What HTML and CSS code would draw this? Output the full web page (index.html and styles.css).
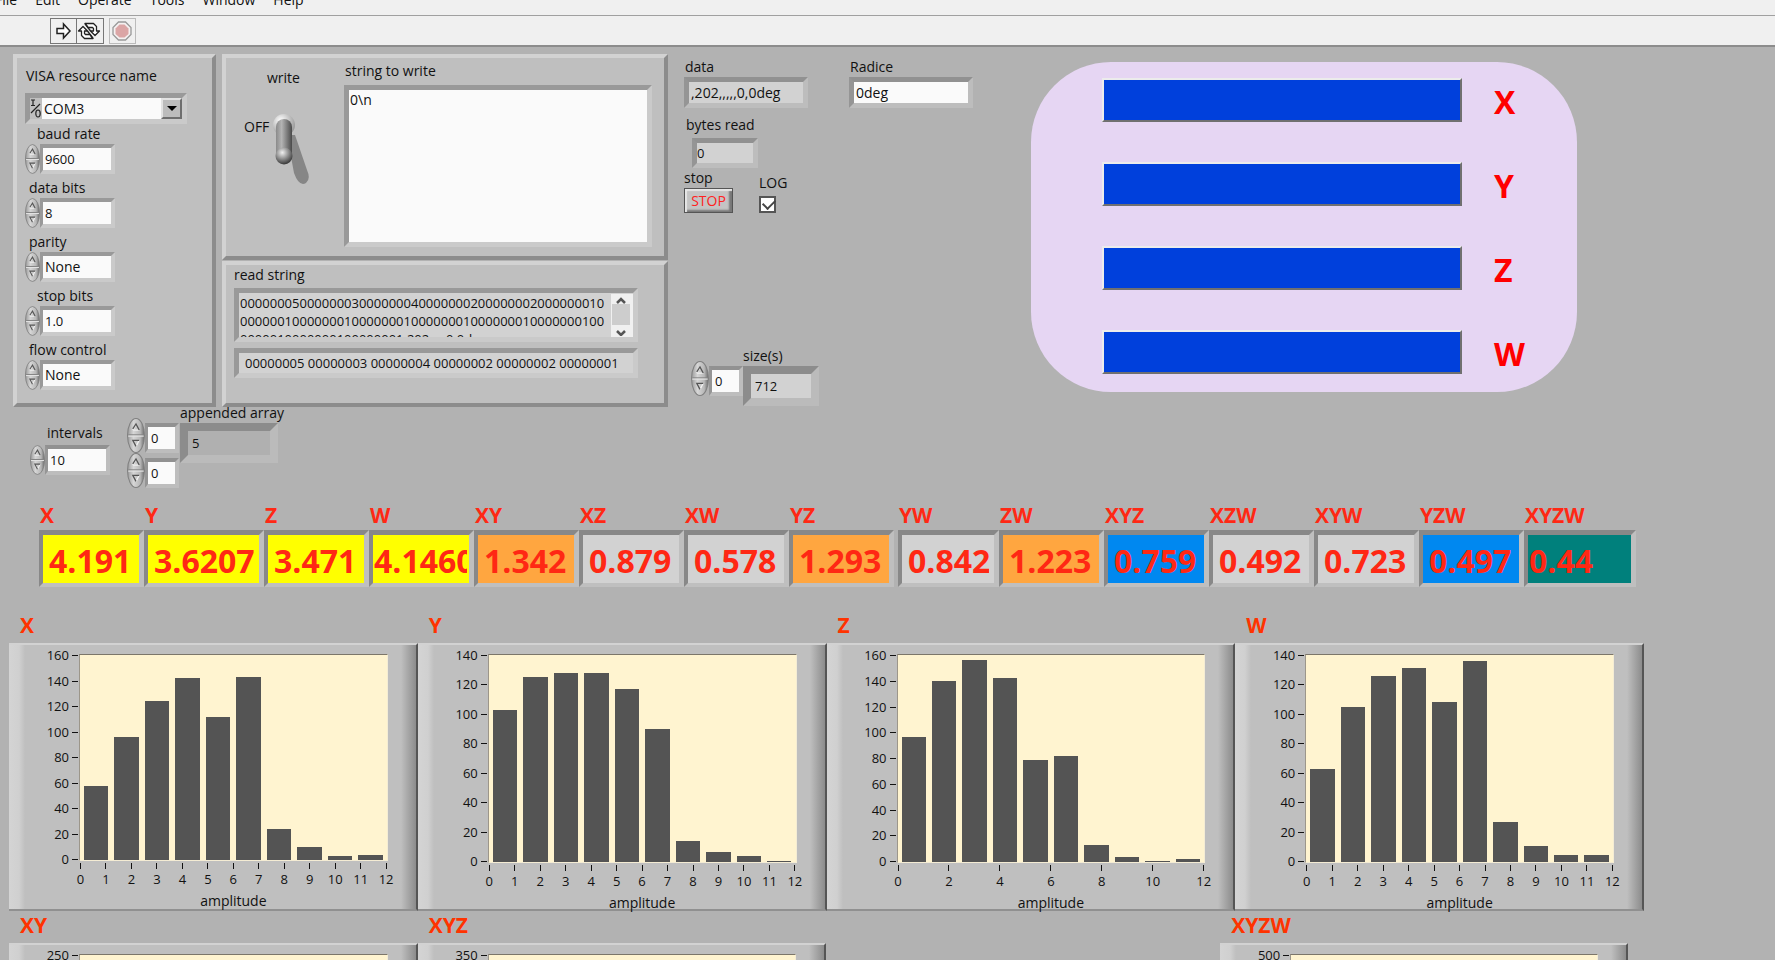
FILE: index.html
```html
<!DOCTYPE html>
<html lang="en">
  <head>
    <meta charset="utf-8">
    <title>Serial acquisition</title>
    <link rel="stylesheet" href="styles.css">
  </head>
  <body>
    <!-- shared icons -->
    <svg class="defs" aria-hidden="true">
      <defs>
        <linearGradient id="metal" x1="0" x2="1">
          <stop offset="0" stop-color="#9a9a9a"/>
          <stop offset=".35" stop-color="#d6d6d6"/>
          <stop offset=".75" stop-color="#b8b8b8"/>
          <stop offset="1" stop-color="#6a6a6a"/>
        </linearGradient>
        <linearGradient id="lever" x1="0" x2="1">
          <stop offset="0" stop-color="#8a8a8a"/>
          <stop offset=".35" stop-color="#b4b4b4"/>
          <stop offset="1" stop-color="#4a4a4a"/>
        </linearGradient>
        <radialGradient id="ball" cx=".35" cy=".3" r=".8">
          <stop offset="0" stop-color="#ffffff"/>
          <stop offset=".5" stop-color="#c4c4c4"/>
          <stop offset="1" stop-color="#8c8c8c"/>
        </radialGradient>
        <radialGradient id="tip" cx=".4" cy=".3" r=".75">
          <stop offset="0" stop-color="#f0f0f0"/>
          <stop offset=".5" stop-color="#8e8e8e"/>
          <stop offset="1" stop-color="#2c2c2c"/>
        </radialGradient>
      </defs>
      <symbol id="spinner" viewBox="0 0 14 29" preserveAspectRatio="none">
        <ellipse cx="7" cy="14.5" rx="6.6" ry="14" fill="url(#metal)" stroke="#808080" stroke-width=".8"/>
        <path d="M1 14h12" stroke="#858585"/>
        <path d="M1 15h12" stroke="#e2e2e2"/>
        <path d="M4.500 10L7 5.500M4.500 10h5" stroke="#eee" fill="none"/>
        <path d="M4.500 9L7 5l2.500 5" stroke="#555" fill="none"/>
        <path d="M9.500 18.500L7 23.500" stroke="#f2f2f2" fill="none"/>
        <path d="M9.500 18.500h-5l2.500 5" stroke="#555" fill="none"/>
      </symbol>
    </svg>

    <nav class="menu">
      <a href="#">File</a>
      <a href="#">Edit</a>
      <a href="#">Operate</a>
      <a href="#">Tools</a>
      <a href="#">Window</a>
      <a href="#">Help</a>
    </nav>
    <div class="toolbar">
      <button class="tool" aria-label="Run">
        <svg width="24" height="24" viewBox="0 0 24 24"><path d="M6 9.500h6.500V5L19 12l-6.500 7v-4.500H6z" fill="#fff" stroke="#222" stroke-width="1.500"/></svg>
      </button>
      <button class="tool" aria-label="Run continuously">
        <svg width="24" height="24" viewBox="0 0 24 24" fill="#fff" stroke="#222" stroke-width="1.300" stroke-linejoin="round">
          <path d="M8 4.500h8.500l3 3V12h3l-4.500 4.500L13.500 12h3V9.500l-1-1H11z"/>
          <path d="M16 19.500H7.500l-3-3V12h-3L6 7.500l4.500 4.500h-3v2.500l1 1H13z"/>
          <path d="M8 4.500l5.500 7.500M16 19.500L10.500 12"/>
        </svg>
      </button>
      <button class="tool tool-off" aria-label="Abort" disabled>
        <svg width="24" height="24" viewBox="0 0 24 24"><path d="M8.500 3h7L21 8.500v7L15.500 21h-7L3 15.500v-7z" fill="#f4f0f0" stroke="#999" stroke-width="1.300"/><path d="M9.500 5.500h5L18.500 9.500v5.500l-4 3.500h-5l-4-3.500V9.500z" fill="#dba5a5"/></svg>
      </button>
    </div>

    <main>
      <div class="top">
        <section class="panel visa">
          <label for="visa">VISA resource name</label>
          <div class="combo">
            <svg width="12" height="22" viewBox="0 0 12 22" fill="none" stroke="#222" stroke-width="1.200"><path d="M1 2h4M3 2v5M1 7.500h4M1 15L10 6"/><ellipse cx="8" cy="15.500" rx="2.200" ry="3.500"/></svg>
            <select id="visa"><option>COM3</option></select>
            <span class="combo-arrow"></span>
          </div>
          <div class="field">
            <label class="inset-lg" for="baud">baud rate</label>
            <div class="spin-box"><button class="spin" aria-label="Change baud rate"><svg><use href="#spinner"/></svg></button><input class="num" id="baud" value="9600"></div>
          </div>
          <div class="field">
            <label for="bits">data bits</label>
            <div class="spin-box"><button class="spin" aria-label="Change data bits"><svg><use href="#spinner"/></svg></button><input class="num" id="bits" value="8"></div>
          </div>
          <div class="field">
            <label for="parity">parity</label>
            <div class="spin-box"><button class="spin" aria-label="Change parity"><svg><use href="#spinner"/></svg></button><input id="parity" value="None"></div>
          </div>
          <div class="field">
            <label class="inset-lg" for="stopbits">stop bits</label>
            <div class="spin-box"><button class="spin" aria-label="Change stop bits"><svg><use href="#spinner"/></svg></button><input class="num" id="stopbits" value="1.0"></div>
          </div>
          <div class="field">
            <label for="flow">flow control</label>
            <div class="spin-box"><button class="spin" aria-label="Change flow control"><svg><use href="#spinner"/></svg></button><input id="flow" value="None"></div>
          </div>
        </section>

        <div class="strings">
          <section class="panel write">
            <div class="toggle">
              <label for="write">write</label>
              <label class="toggle-row" for="write">
                <span>OFF</span>
                <input id="write" type="checkbox">
                <svg width="38" height="72" viewBox="0 0 38 72">
                  <path d="M14 22l7 38q5 14 12 10 5-4 1-13L22 22z" fill="#868686"/>
                  <circle cx="11" cy="12" r="11" fill="url(#ball)"/>
                  <rect x="3" y="6" width="16" height="44" rx="8" fill="url(#lever)"/>
                  <circle cx="11" cy="43" r="8.500" fill="url(#tip)"/>
                </svg>
              </label>
            </div>
            <div class="group">
              <label for="towrite">string to write</label>
              <textarea class="sunken" id="towrite">0\n</textarea>
            </div>
          </section>
          <section class="panel read">
            <label for="readstr">read string</label>
            <div class="sunken read-box">
              <textarea class="num" id="readstr" readonly>000000050000000300000004000000020000000200000001000000010000000100000001000000010000000100000001000000010000000100000001,202,,,,,0,0deg</textarea>
              <div class="scroll">
                <svg width="20" height="42" viewBox="0 0 20 42"><rect x="1" y="10" width="18" height="21" fill="#cdcdcd"/><path d="M6 9l4-4 4 4M6 37l4 4 4-4" fill="none" stroke="#555" stroke-width="2.500"/></svg>
              </div>
            </div>
            <input class="sunken num read-line" aria-label="read words" readonly value="00000005 00000003 00000004 00000002 00000002 00000001">
          </section>
        </div>

        <div class="io">
          <div class="io-row">
            <div class="group">
              <label for="data">data</label>
              <input class="sunken" id="data" readonly value=",202,,,,,0,0deg">
            </div>
            <div class="group">
              <label for="radice">Radice</label>
              <input class="sunken" id="radice" value="0deg">
            </div>
          </div>
          <div class="group bytes">
            <label for="bytes">bytes read</label>
            <input class="sunken num" id="bytes" readonly value="0">
          </div>
          <div class="io-row stop-row">
            <div class="group">
              <label for="stop">stop</label>
              <button class="stop" id="stop">STOP</button>
            </div>
            <div class="group log">
              <label for="log">LOG</label>
              <input id="log" type="checkbox" checked>
            </div>
          </div>
          <div class="array sizes">
            <div class="array-index">
              <div class="spin-box"><button class="spin" aria-label="Change size index"><svg><use href="#spinner"/></svg></button><input class="num" aria-label="size index" value="0"></div>
            </div>
            <div class="group">
              <label for="size">size(s)</label>
              <input class="num array-value" id="size" readonly value="712">
            </div>
          </div>
        </div>

        <section class="leds">
          <div class="led-row"><span class="led"></span><b>X</b></div>
          <div class="led-row"><span class="led"></span><b>Y</b></div>
          <div class="led-row"><span class="led"></span><b>Z</b></div>
          <div class="led-row"><span class="led"></span><b>W</b></div>
        </section>
      </div>

      <div class="lower">
        <div class="field intervals">
          <label for="intervals">intervals</label>
          <div class="spin-box"><button class="spin" aria-label="Change intervals"><svg><use href="#spinner"/></svg></button><input class="num" id="intervals" value="10"></div>
        </div>
        <div class="array">
          <div class="array-index">
            <div class="spin-box"><button class="spin" aria-label="Change row index"><svg><use href="#spinner"/></svg></button><input class="num" aria-label="row index" value="0"></div>
            <div class="spin-box"><button class="spin" aria-label="Change column index"><svg><use href="#spinner"/></svg></button><input class="num" aria-label="column index" value="0"></div>
          </div>
          <div class="group appended">
            <label for="appended">appended array</label>
            <input class="num array-value" id="appended" readonly value="5">
          </div>
        </div>
      </div>

      <div class="values">
        <div class="value yellow"><label for="vx">X</label><output id="vx">4.191</output></div>
        <div class="value yellow"><label for="vy">Y</label><output id="vy">3.6207</output></div>
        <div class="value yellow"><label for="vz">Z</label><output id="vz">3.471</output></div>
        <div class="value yellow tight"><label for="vw">W</label><output id="vw">4.1460</output></div>
        <div class="value orange"><label for="vxy">XY</label><output id="vxy">1.342</output></div>
        <div class="value"><label for="vxz">XZ</label><output id="vxz">0.879</output></div>
        <div class="value"><label for="vxw">XW</label><output id="vxw">0.578</output></div>
        <div class="value orange spaced"><label for="vyz">YZ</label><output id="vyz">1.293</output></div>
        <div class="value"><label for="vyw">YW</label><output id="vyw">0.842</output></div>
        <div class="value orange"><label for="vzw">ZW</label><output id="vzw">1.223</output></div>
        <div class="value blue"><label for="vxyz">XYZ</label><output id="vxyz">0.759</output></div>
        <div class="value"><label for="vxzw">XZW</label><output id="vxzw">0.492</output></div>
        <div class="value"><label for="vxyw">XYW</label><output id="vxyw">0.723</output></div>
        <div class="value blue"><label for="vyzw">YZW</label><output id="vyzw">0.497</output></div>
        <div class="value teal tight"><label for="vxyzw">XYZW</label><output id="vxyzw">0.44</output></div>
      </div>

      <div class="charts" id="charts"></div>
      <div class="charts charts-more" id="chartsMore"></div>
    </main>
    <script src="charts.js"></script>
  </body>
</html>
```
FILE: styles.css
```css
* {
  box-sizing: border-box;
  margin: 0;
  padding: 0;
}

body {
  height: 100vh;
  overflow: hidden;
  background: #b2b2b2;
  color: #111;
  font: 14px/20px "Open Sans", sans-serif;
}

input, select, textarea, button {
  font: inherit;
  color: inherit;
  border-radius: 0;
  outline: none;
}

label {
  display: block;
  white-space: nowrap;
}

.defs {
  position: absolute;
  width: 0;
  height: 0;
}

/* menu and toolbar */
.menu {
  display: flex;
  align-items: flex-end;
  gap: 18px;
  height: 15px;
  margin-left: -5px;
  padding-bottom: 5px;
  background: #f0f0f0;
}

.menu a {
  color: #111;
  text-decoration: none;
}

.toolbar {
  display: flex;
  height: 32px;
  padding: 2px 50px;
  background: #f0f0f0;
  border-top: 1px solid #a0a0a0;
  border-bottom: 2px solid #8c8c8c;
}

.tool {
  width: 27px;
  height: 26px;
  border: 1px solid #777;
  background: #f0f0f0;
}

.tool + .tool {
  border-left: 0;
}

.tool svg {
  display: block;
}

.tool.tool-off {
  margin-left: 5px;
  border: 1px solid #bbb;
}

main {
  padding-top: 7px;
}

/* bevels */
.panel {
  background: #bfbfbf;
  border: 4px solid;
  border-color: #d2d2d2 #8c8c8c #8c8c8c #d2d2d2;
}

.sunken {
  border: 5px solid;
  border-color: #919191 #bdbdbd #bdbdbd #959595;
  background: #fafafa;
}

.sunken[readonly] {
  background: #d2d2d2;
}

.panel .sunken {
  border-color: #999 #cacaca #cacaca #999;
}

.num {
  font-size: 13px;
}

.top {
  display: flex;
  align-items: stretch;
  gap: 6px;
  padding-left: 13px;
}

/* serial settings */
.visa {
  width: 203px;
  height: 353px;
  padding: 8px;
}

.combo {
  position: relative;
  display: flex;
  width: 162px;
  height: 31px;
  margin: 7px 0 0;
  border: 5px solid;
  border-color: #999 #cacaca #cacaca #999;
}

.visa > label {
  padding-left: 1px;
}

.combo select {
  flex: 1;
  padding-left: 2px;
  border: 0;
  background: #fafafa;
  appearance: none;
}

.combo-arrow {
  position: absolute;
  top: 0;
  right: 0;
  width: 21px;
  height: 21px;
  background: #bcbcbc;
  border: 2px solid;
  border-color: #e2e2e2 #6e6e6e #6e6e6e #e2e2e2;
  pointer-events: none;
}

.combo-arrow::after {
  content: "";
  position: absolute;
  top: 6px;
  left: 4px;
  border: 5px solid transparent;
  border-top-color: #000;
  border-bottom: 0;
}

.field {
  margin-bottom: 4px;
}

.field label {
  padding-left: 4px;
}

.field .inset-lg {
  padding-left: 12px;
}

.spin-box {
  display: flex;
  height: 30px;
}

.spin {
  width: 15px;
  height: 30px;
  border: 0;
  background: none;
}

.spin svg {
  display: block;
  width: 100%;
  height: 100%;
}

.spin-box input {
  width: 75px;
  padding-left: 2px;
  background: #fafafa;
  border: 4px solid;
  border-left-width: 3px;
  border-color: #919191 #bdbdbd #bdbdbd #959595;
}

.panel .spin-box input {
  border-color: #999 #cacaca #cacaca #999;
}

/* write and read strings */
.strings {
  display: flex;
  flex-direction: column;
  gap: 1px;
  width: 446px;
}

.write {
  display: flex;
  height: 206px;
  padding-top: 3px;
}

.toggle {
  width: 118px;
  padding: 7px 0 0 18px;
}

.toggle > label:first-child {
  padding-left: 23px;
}

.toggle .toggle-row {
  display: flex;
  align-items: flex-start;
  gap: 4px;
  margin-top: 25px;
}

.toggle-row span {
  margin-top: 4px;
}

.toggle-row input {
  position: absolute;
  opacity: 0;
}

.write label {
  padding-left: 1px;
}

.write .toggle-row {
  padding-left: 0;
}

.write textarea {
  display: block;
  width: 308px;
  height: 162px;
  margin-top: 4px;
  padding: 0 1px;
  resize: none;
}

.read {
  flex: 1;
  padding-left: 8px;
}

.read-box {
  display: flex;
  width: 404px;
  height: 54px;
  margin: 3px 0 6px;
  overflow: hidden;
}

.panel .read-box {
  background: #d2d2d2;
}

.read-box textarea {
  flex: 1;
  padding: 1px;
  border: 0;
  background: none;
  resize: none;
  overflow: hidden;
  line-height: 18px;
  word-break: break-all;
}

.scroll {
  width: 22px;
  margin-top: 1px;
  background: #f0f0f0;
}

.scroll svg {
  display: block;
}

.read-line {
  display: block;
  width: 404px;
  height: 30px;
  padding-left: 6px;
}

/* data, stop and log */
.io {
  width: 310px;
  margin-left: 10px;
  padding-top: 3px;
}

.io-row {
  display: flex;
  gap: 41px;
}

.io-row .sunken {
  display: block;
  width: 124px;
  height: 31px;
  padding-left: 2px;
}

.io-row label {
  padding-left: 1px;
}

.bytes {
  margin-top: 7px;
  padding-left: 2px;
}

.bytes input {
  display: block;
  width: 66px;
  height: 30px;
  margin: 3px 0 0 6px;
}

.stop-row {
  align-items: flex-end;
  gap: 26px;
}

.stop-row label {
  padding: 0;
}

.stop {
  display: block;
  width: 49px;
  height: 25px;
  color: #f22;
  line-height: 16px;
  background: #c4c4c4;
  border: 1px solid #555;
  box-shadow: inset 2px 2px 1px #e6e6e6, inset -3px -2px 2px #777;
}

.log input {
  display: block;
  position: relative;
  width: 17px;
  height: 17px;
  margin-top: 3px;
  background: #fff;
  border: 2px solid #555;
  appearance: none;
}

.log input:checked::before {
  content: "";
  position: absolute;
  top: 1px;
  left: 2px;
  width: 10px;
  height: 6px;
  border: solid #444;
  border-width: 0 0 2px 2px;
  transform: rotate(-45deg);
}

/* array controls: index on the left, element on the right */
.array {
  display: flex;
}

.array-index {
  padding-top: 15px;
}

.array-index .spin-box {
  align-items: flex-end;
  height: 35px;
}

.array-index .spin {
  width: 18px;
  height: 35px;
}

.array-index input {
  width: 34px;
  height: 30px;
  padding-left: 3px;
}

.array-value {
  display: block;
  width: 76px;
  height: 40px;
  padding-left: 4px;
  background: #d2d2d2;
  border: 8px solid;
  border-color: #8c8c8c #bbb #bbb #8c8c8c;
}

.sizes {
  margin-top: 133px;
  padding-left: 7px;
}

.leds {
  display: flex;
  flex: 1;
  flex-direction: column;
  gap: 41px;
  height: 330px;
  margin: 8px 198px 0 31px;
  padding: 16px 33px 0 71px;
  background: #e6d6f3;
  border-radius: 80px;
}

.led-row {
  display: flex;
  align-items: center;
  gap: 32px;
  height: 43px;
  color: #f00;
  font-size: 32px;
}

.led {
  flex: 1;
  height: 44px;
  background: #0040dc;
  border: 2px solid;
  border-color: #ececec #707070 #707070 #ececec;
}

.led-row b {
  width: 50px;
  padding-top: 4px;
}

.lower {
  display: flex;
  gap: 17px;
  margin-top: -4px;
  padding-left: 30px;
}

.intervals {
  padding-top: 20px;
}

.intervals label {
  padding-left: 17px;
}

.intervals .spin-box {
  margin-top: 2px;
}

.intervals input {
  width: 65px;
}

.appended {
  padding-left: 1px;
}

.appended input {
  width: 98px;
  background: #b0b0b0;
}

/* big readouts */
.values {
  display: grid;
  grid-template-columns: 105fr 120fr repeat(5, 105fr) 109fr 101fr repeat(5, 105fr) 112fr;
  margin: 15px 139px 0 39px;
}

.value {
  min-width: 0;
}

.value label {
  height: 24px;
  margin-bottom: 3px;
  padding-left: 1px;
  color: #ff2814;
  font-size: 21px;
  font-weight: bold;
  line-height: 24px;
}

.value output {
  display: block;
  height: 57px;
  padding: 3px 5px 0 6px;
  overflow: clip;
  overflow-clip-margin: content-box;
  color: #ff2814;
  background: #d2d2d2;
  border: 5px solid;
  border-width: 5px 5px 4px 4px;
  border-color: #888 #bfbfbf #bfbfbf #888;
  font-size: 32px;
  font-weight: bold;
  line-height: 46px;
}

.yellow output {
  background: #ff0;
}

.orange output {
  background: #ffa640;
}

.blue output {
  background: #0088f0;
}

.teal output {
  background: #00807c;
}

.tight output {
  padding-left: 1px;
  padding-right: 2px;
}

.spaced output {
  margin-right: 4px;
}

/* histograms */
.charts {
  display: grid;
  grid-template-columns: repeat(4, 1fr);
  margin: 26px 131px 0 9px;
}

.charts-more {
  grid-template-columns: 409fr 409fr 394fr 408fr;
  margin: 2px 147px 0 9px;
}

.chart h2 {
  margin-bottom: 6px;
  padding-left: 11px;
  color: #ff3300;
  font-size: 21px;
  line-height: 24px;
}

.chart:nth-child(4) {
  grid-column: 4;
}

.frame {
  height: 268px;
  padding: 9px 28px 0 16px;
  border-top: 2px solid #d2d2d2;
  border-bottom: 2px solid #909090;
  border-right: 2px solid #555;
  background: linear-gradient(to right, #d4d4d4, #d0d0d0 10px, #bfbfbf 16px, #bfbfbf calc(100% - 15px), #8c8c8c);
}

.plot-row {
  display: flex;
  height: 209px;
}

.short .plot-row {
  height: 207px;
}

.y-axis {
  display: flex;
  flex-direction: column;
  justify-content: space-between;
  width: 54px;
  padding: 1px 0;
  list-style: none;
}

.y-axis li {
  display: flex;
  align-items: center;
  justify-content: flex-end;
  gap: 3px;
  height: 1px;
  font-size: 13px;
  line-height: 1px;
}

.y-axis li::after {
  content: "";
  width: 6px;
  height: 1px;
  margin-right: 1px;
  background: #111;
}

.plot {
  display: flex;
  flex: 1;
  align-items: flex-end;
  gap: 6px;
  padding: 0 4px;
  background: #fff4d0;
  border: 1px solid;
  border-color: #7c766a #f4ecd4 #f4ecd4 #9c968a;
}

.bar {
  flex: 1;
  background: #545454;
}

.x-axis {
  display: flex;
  justify-content: space-between;
  height: 30px;
  margin-left: 55px;
  padding: 2px 1px 0 0;
  list-style: none;
}

.x-axis li {
  display: flex;
  flex-direction: column;
  align-items: center;
  width: 1px;
  font-size: 13px;
  line-height: 20px;
}

.x-axis li::before {
  content: "";
  flex: none;
  width: 1px;
  height: 6px;
  background: #111;
}

.x-title {
  margin-left: 54px;
  text-align: center;
}
```
FILE: charts.js
```js
// max / step: y scale, xStep: spacing of the amplitude ticks
var histograms = [
  { name: 'X', max: 160, step: 20, xStep: 1, short: true, counts: [58, 96, 124, 142, 112, 143, 24, 10, 3, 4] },
  { name: 'Y', max: 140, step: 20, xStep: 1, counts: [103, 125, 128, 128, 117, 90, 14, 7, 4, 1] },
  { name: 'Z', max: 160, step: 20, xStep: 2, counts: [97, 140, 156, 142, 79, 82, 13, 4, 1, 2] },
  { name: 'W', max: 140, step: 20, xStep: 1, counts: [63, 105, 126, 131, 108, 136, 27, 11, 5, 5] }
];

var combined = [
  { name: 'XY', max: 250, counts: [] },
  { name: 'XYZ', max: 350, counts: [] },
  null,
  { name: 'XYZW', max: 500, counts: [] }
];

function ticks(from, to, step) {
  var html = '';
  for (var v = from; step > 0 ? v <= to : v >= to; v += step) {
    html += '<li>' + v + '</li>';
  }
  return html;
}

function chart(h) {
  if (!h) {
    return '<div></div>';
  }
  var bars = h.counts.map(function (n) {
    return '<div class="bar" style="height: ' + (n / h.max * 100) + '%"></div>';
  }).join('');
  var yTicks = ticks(h.max, h.step ? 0 : h.max, -(h.step || h.max));
  var html = '<section class="chart' + (h.short ? ' short' : '') + '"><h2>' + h.name + '</h2><div class="frame">' +
    '<div class="plot-row"><ol class="y-axis">' + yTicks + '</ol><div class="plot">' + bars + '</div></div>';
  if (h.xStep) {
    html += '<ol class="x-axis">' + ticks(0, 12, h.xStep) + '</ol><p class="x-title">amplitude</p>';
  }
  return html + '</div></section>';
}

document.getElementById('charts').innerHTML = histograms.map(chart).join('');
document.getElementById('chartsMore').innerHTML = combined.map(chart).join('');
```
